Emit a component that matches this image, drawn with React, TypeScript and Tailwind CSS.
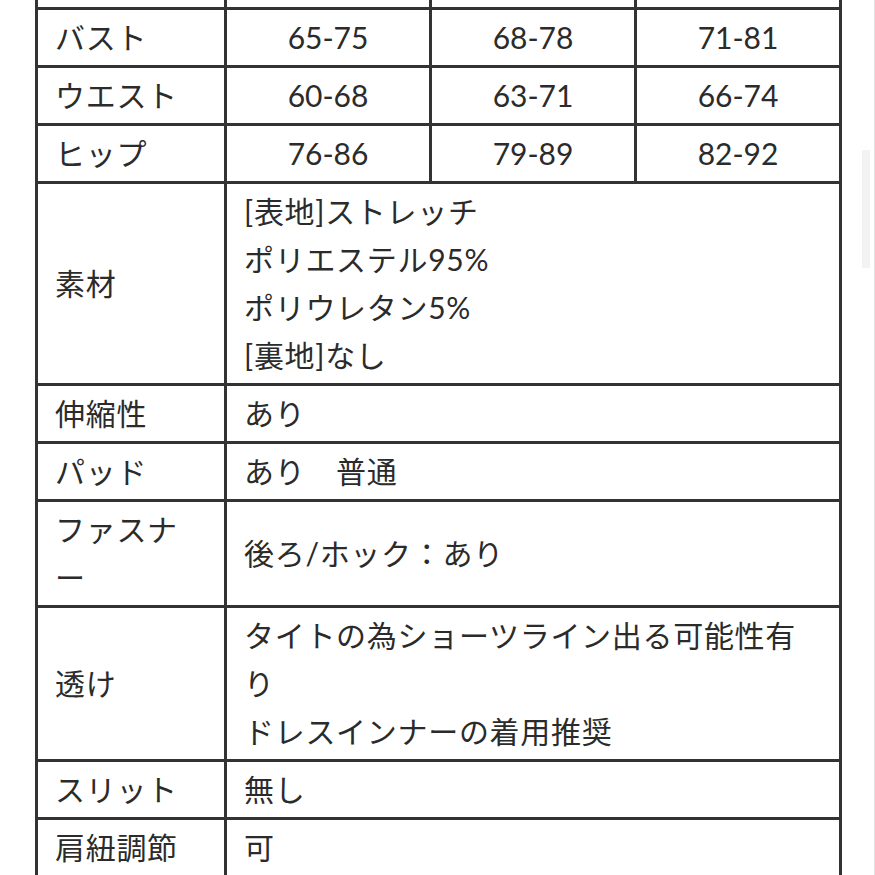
import React from 'react';

const sizes = [
  { label: 'バスト', values: ['65-75', '68-78', '71-81'] },
  { label: 'ウエスト', values: ['60-68', '63-71', '66-74'] },
  { label: 'ヒップ', values: ['76-86', '79-89', '82-92'] },
];

const details: { label: string; lines: string[] }[] = [
  { label: '素材', lines: ['[表地]ストレッチ', 'ポリエステル95%', 'ポリウレタン5%', '[裏地]なし'] },
  { label: '伸縮性', lines: ['あり'] },
  { label: 'パッド', lines: ['あり　普通'] },
  { label: 'ファスナー', lines: ['後ろ/ホック：あり'] },
  { label: '透け', lines: ['タイトの為ショーツライン出る可能性有り', 'ドレスインナーの着用推奨'] },
  { label: 'スリット', lines: ['無し'] },
  { label: '肩紐調節', lines: ['可'] },
];

const cell = 'border-[3px] border-[#333] pt-[3px] pb-[4px] leading-[48px]';

const App: React.FC = () => {
  return (
    <div
      className="relative h-[875px] w-[875px] overflow-hidden bg-white text-[#2b2b2b]"
      style={{ fontFamily: 'Lato, "Noto Sans CJK JP", sans-serif' }}
    >
      {/* faint scrollbar on the right */}
      <div className="absolute right-[5px] top-[150px] h-[118px] w-[8px] bg-[#f3f3f3]" />
      <div className="absolute right-0 top-0 h-full w-px bg-[#e2e2e2]" />

      <div className="-mt-[51px] pl-[35px]">
        <table className="w-[806px] table-fixed border-collapse border-l-2 text-[30px] tracking-[0.7px]">
          <colgroup>
            <col className="w-[189px]" />
            <col className="w-[205px]" />
            <col className="w-[205px]" />
            <col className="w-[205px]" />
          </colgroup>
          <tbody>
            {/* header row, scrolled out of view */}
            <tr>
              <td className={cell}>{'\u00a0'}</td>
              <td className={cell}>{'\u00a0'}</td>
              <td className={cell}>{'\u00a0'}</td>
              <td className={cell}>{'\u00a0'}</td>
            </tr>
            {sizes.map((row) => (
              <tr key={row.label}>
                <td className={`${cell} pl-[17px]`}>{row.label}</td>
                {row.values.map((v) => (
                  <td key={v} className={`${cell} text-center tracking-normal`}>
                    {v}
                  </td>
                ))}
              </tr>
            ))}
            {details.map((row) => (
              <tr key={row.label}>
                <td className={`${cell} pl-[17px] pr-[30px] align-middle`}>{row.label}</td>
                <td colSpan={3} className={`${cell} pl-[17px] pr-[30px]`}>
                  {row.lines.map((l) => (
                    <div key={l}>{l}</div>
                  ))}
                </td>
              </tr>
            ))}
          </tbody>
        </table>
      </div>
    </div>
  );
};

export default App;
